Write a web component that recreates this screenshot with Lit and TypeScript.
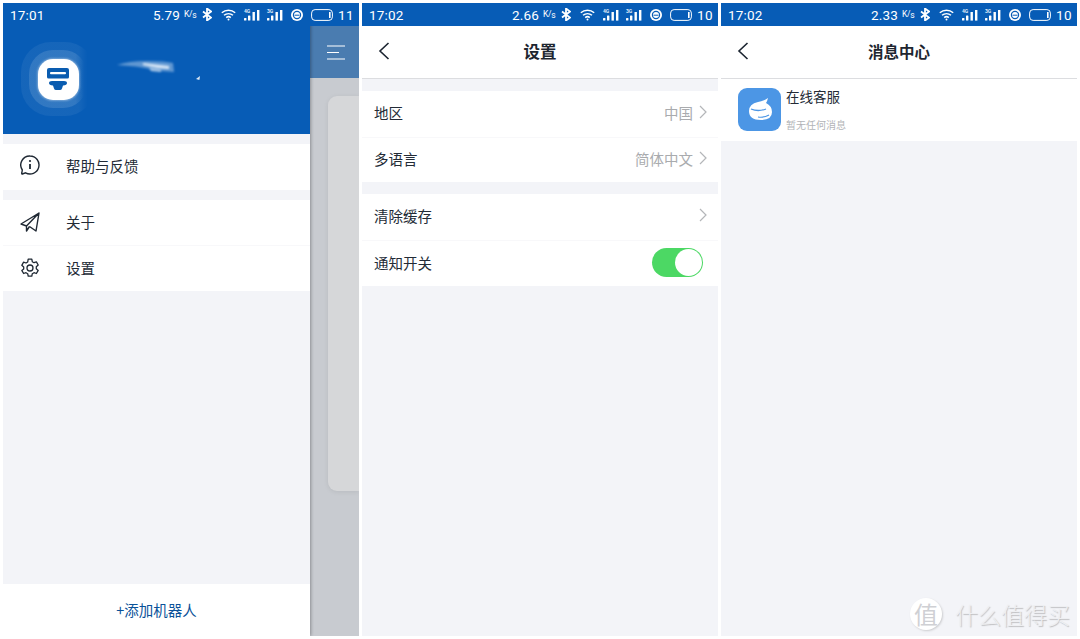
import { LitElement, html, css, svg } from "lit";
import { customElement, property } from "lit/decorators.js";

const signal = (t: string) => svg`<svg class="sig" width="17" height="14" viewBox="0 0 17 14">
  <text x="1" y="5" font-size="5" font-weight="700" fill="#dfeaf7" font-family="Roboto, sans-serif">${t}</text>
  <g fill="#fff"><rect x="1" y="10" width="2.400" height="2.600" rx=".6"/><rect x="5" y="7.500" width="2.400" height="5.100" rx=".6"/><rect x="9.500" y="4" width="2.400" height="8.600"/><rect x="14" y="2" width="2.400" height="10.600"/></g></svg>`;

@customElement("status-bar")
class StatusBar extends LitElement {
  @property() time = "";
  @property() speed = "";
  @property() batt = "";
  static styles = css`
    :host { display: flex; align-items: center; height: 23px; background: #075cb6; color: #fff;
      font-family: Roboto, "Liberation Sans", sans-serif; font-size: 13.5px; padding: 0 6px 0 7px; flex: none; }
    .time { letter-spacing: .2px; }
    .right { margin-left: auto; display: flex; align-items: center; }
    .speed { letter-spacing: .2px; }
    .unit { font-size: 8.500px; margin: -2px 6px 0 4px; width: 12px; white-space: nowrap; letter-spacing: -.3px; }
    .unit sub { font-size: 8.500px; vertical-align: -1px; line-height: 0; }
    svg { display: block; flex: none; }
    .bt { margin-right: 9px; }
    .wifi { margin-right: 7px; }
    .sig { margin-right: 6px; }
    .hd { margin: 0 8px 0 2px; }
    .bat { margin-right: 5px; }
    .num { letter-spacing: .4px; width: 15px; }
  `;
  render() {
    return html`<span class="time">${this.time}</span>
      <div class="right">
        <span class="speed">${this.speed}</span><span class="unit">K/<sub>s</sub></span>
        <svg class="bt" width="10" height="13" viewBox="0 0 10 13" fill="none" stroke="#fff" stroke-width="1.800"><path d="M1 3.500l8 6-4 3V.5l4 3-8 6"/></svg>
        <svg class="wifi" width="15" height="12" viewBox="0 0 15 12" fill="none" stroke="#fff" stroke-width="1.500"><path d="M.8 3.800a10 10 0 0 1 13.400 0M3 6.300a7 7 0 0 1 9 0M5.200 8.600a3.600 3.600 0 0 1 4.600 0"/><circle cx="7.500" cy="10.600" r="1" fill="#fff" stroke="none"/></svg>
        ${signal("4G")}${signal("3G")}
        <svg class="hd" width="12" height="12" viewBox="0 0 12 12"><circle cx="6" cy="6" r="6" fill="#fff"/><circle cx="6" cy="6" r="3.600" fill="none" stroke="#075cb6" stroke-width="1.200"/><path d="M3.500 6.200h5" stroke="#075cb6" stroke-width="1"/></svg>
        <svg class="bat" width="22" height="12" viewBox="0 0 22 12" fill="none" stroke="#fff"><rect x=".6" y=".6" width="20.800" height="10.800" rx="3.500"/><rect x="18" y="3" width="1.600" height="6" fill="#fff" stroke="none"/></svg>
        <span class="num">${this.batt}</span>
      </div>`;
  }
}

const chevron = html`<svg class="chev" width="8" height="14" viewBox="0 0 8 14" fill="none" stroke="#b4b6b9" stroke-width="1.200"><path d="M1 1l6 6-6 6"/></svg>`;
const back = html`<svg class="back" width="12" height="18" viewBox="0 0 12 18" fill="none" stroke="#1b2430" stroke-width="1.600"><path d="M10.500 1L2 9l8.500 8"/></svg>`;

@customElement("app-root")
class AppRoot extends LitElement {
  static styles = css`
    :host { display: grid; grid-template-columns: 356px 356px 356px; gap: 3px; padding: 3px; height: 639px; box-sizing: border-box;
      background: #fff; font-family: "Noto Sans CJK SC", "Liberation Sans", sans-serif; color: #232b36; overflow: hidden; }
    .panel { height: 633px; display: flex; flex-direction: column; background: #f3f4f8; overflow: hidden; position: relative; }
    .home { flex-direction: row; }
    .home status-bar { position: absolute; left: 0; right: 0; top: 0; z-index: 2; }
    .drawer { width: 307px; display: flex; flex-direction: column; background: #f3f4f8; box-shadow: 1px 0 3px rgba(0,0,0,.3); z-index: 1; position: relative; padding-top: 23px; box-sizing: border-box; }
    .side { flex: 1; display: flex; flex-direction: column; background: #c8cbd0; min-width: 0; padding-top: 23px; }
    .side-head { height: 52px; background: #4a7cb0; display: flex; align-items: center; justify-content: center; flex: none; padding-left: 3px; }
    .card { margin: 18px 0 0 18px; height: 395px; background: #d6d7d9; border-radius: 9px 0 0 9px; box-shadow: 0 1px 5px rgba(0,0,0,.08); }
    .profile { height: 108px; background: #075cb6; flex: none; display: flex; align-items: center; padding: 0 0 2px 18px; box-sizing: border-box; }
    .halo { width: 74px; height: 74px; border-radius: 30px; background: linear-gradient(90deg, rgba(255,255,255,.06) 78%, transparent 90%); display: flex; align-items: center; justify-content: center; flex: none; }
    .halo2 { width: 58px; height: 58px; border-radius: 24px; background: linear-gradient(90deg, rgba(255,255,255,.12) 80%, transparent 95%); display: flex; align-items: center; justify-content: center; }
    .logo { width: 41px; height: 41px; border-radius: 15px; background: #fff; box-shadow: 0 0 2px 1px rgba(255,255,255,.35); display: flex; align-items: center; justify-content: center; }
    .smear { display: block; flex: none; margin: -14px 0 0 16px; }
    .group { background: #fff; flex: none; }
    .gap { margin-top: 10px; }
    .menu { height: 45.500px; display: flex; align-items: center; padding: 0 0 1px 17px; font-size: 14.500px; box-sizing: border-box; }
    .menu.first { padding-bottom: 3px; }
    .menu + .menu { border-top: 1px solid #f8f8fa; }
    .menu svg { margin-right: 26px; flex: none; }
    .spacer { flex: 1; }
    .add { height: 52px; background: #fff; flex: none; display: flex; align-items: center; justify-content: center; color: #0a5299; font-size: 14.500px; padding-bottom: 2px; box-sizing: border-box; }
    .bar { height: 53px; background: #fff; border-bottom: 1px solid #dcdde0; flex: none; display: grid; grid-template-columns: 1fr auto 1fr; align-items: center; box-sizing: border-box; padding: 0 16px 3px; }
    .bar h1 { margin: 0; font-size: 15.500px; font-weight: 700; color: #1e2630; }
    .bar h1.big { font-size: 16.500px; }
    .back { display: block; }
    .rows { margin-top: 12px; }
    .rows + .rows { margin-top: 12px; }
    .row { height: 45.500px; display: flex; align-items: center; padding: 0 11px 3px 12px; font-size: 14.500px; box-sizing: border-box; }
    .tall .row { height: 46px; }
    .row + .row { border-top: 1px solid #f8f8fa; }
    .val { margin-left: auto; color: #a9abae; margin-right: 6px; }
    .only { margin-left: auto; }
    .switch { width: 51px; height: 29px; border-radius: 15px; background: #4cd864; display: flex; justify-content: flex-end; box-sizing: border-box; padding: 1px; margin: 1px 4px 0 auto; }
    .switch i { width: 27px; height: 27px; border-radius: 50%; background: #fff; display: block; }
    .msg { height: 62px; background: #fff; flex: none; display: flex; align-items: center; padding: 0 0 2px 17px; box-sizing: border-box; }
    .avatar { width: 43px; height: 43px; border-radius: 9px; background: #4c96e5; display: flex; align-items: center; justify-content: center; margin-right: 5px; flex: none; }
    .msg-text { display: flex; flex-direction: column; height: 43px; justify-content: space-between; margin-bottom: 2px; }
    .msg-title { font-size: 13.500px; line-height: 18px; }
    .msg-sub { font-size: 10px; line-height: 14px; color: #b2b4b7; margin-bottom: -2px; }
    .fill { flex: 1; position: relative; }
    .wm { position: absolute; right: 7px; bottom: 6px; display: flex; align-items: center; gap: 13px; color: #eeeff2; font-size: 23px; font-weight: 300; text-shadow: 1px 1px 1px rgba(110,110,110,.4); white-space: nowrap; line-height: 32px; }
    .wm b { width: 32px; height: 32px; border-radius: 50%; background: #fff; color: #cfd0d4; font-weight: 400; font-size: 24px; display: flex; align-items: center; justify-content: center; text-shadow: none; box-shadow: 1px 1px 2px rgba(120,120,120,.3); }
  `;
  render() {
    return html`
      <section class="panel home">
        <status-bar time="17:01" speed="5.79" batt="11"></status-bar>
        <div class="drawer">
          <div class="profile">
            <div class="halo"><div class="halo2"><div class="logo">
              <svg width="26" height="26" viewBox="0 0 26 26"><path d="M2 4q0-2 2-2h18q2 0 2 2v7q0 1.500-1.500 1.500h-19Q2 12.500 2 11z" fill="#0a5cb0"/><rect x="5" y="6" width="16" height="2.200" rx="1" fill="#fff"/><path d="M4 17q0-2 3-2h12q3 0 3 2t-4 2.500l-1 3q-.5 1.500-2 1.500h-4q-1.500 0-2-1.500l-1-3Q4 19 4 17z" fill="#0a5cb0"/></svg>
            </div></div></div>
            <svg class="smear" width="96" height="32" viewBox="0 0 96 32">
              <defs><filter id="s"><feGaussianBlur stdDeviation="1.100"/></filter></defs>
              <g filter="url(#s)" fill="#a9c8ea"><path d="M6 9q12-4 30-4 18 0 26 2l1 9q-12 0-24-3T6 9z" opacity=".55"/><path d="M32 7l26 3v3l-12-1-14-3z" fill="#e6eff9" opacity=".9"/><path d="M38 12l12 2v2l-10-1z" fill="#e6eff9" opacity=".7"/></g>
              <path d="M85 23l4-3-.6 4z" fill="#dbe8f6"/>
            </svg>
          </div>
          <div class="group gap">
            <div class="menu first">
              <svg width="20" height="20" viewBox="0 0 20 20" fill="none" stroke="#1f2833" stroke-width="1.400"><path d="M10 1a9 9 0 1 1-4.500 16.800L2.500 19q-1 0-.7-1l.5-3A9 9 0 0 1 10 1z"/><path d="M10 9v5" stroke-width="1.800"/><circle cx="10" cy="6" r="1.100" fill="#1f2833" stroke="none"/></svg>
              帮助与反馈
            </div>
          </div>
          <div class="group gap">
            <div class="menu">
              <svg width="20" height="20" viewBox="0 0 20 20" fill="none" stroke="#1f2833" stroke-width="1.400" stroke-linejoin="round"><path d="M19 1L1 12l5.500 2L19 1zM19 1l-3 18-6.500-4.500M6.500 14v5l3-4.500"/></svg>
              关于
            </div>
            <div class="menu">
              <svg width="20" height="20" viewBox="0 0 20 20" fill="none" stroke="#1f2833" stroke-width="1.300" stroke-linejoin="round"><path d="M8.200 1.200h3.600l.5 2.500 1.700 1 2.400-.8 1.800 3.100-1.900 1.700v2l1.900 1.700-1.800 3.100-2.400-.8-1.700 1-.5 2.500H8.200l-.5-2.500-1.700-1-2.400.8-1.800-3.100L3.700 11V9L1.800 7.300 3.600 4.200l2.400.8 1.700-1z"/><circle cx="10" cy="10" r="3"/></svg>
              设置
            </div>
          </div>
          <div class="spacer"></div>
          <div class="add">+添加机器人</div>
        </div>
        <div class="side">
          <div class="side-head">
            <svg width="18" height="15" viewBox="0 0 18 15" fill="none" stroke="#fff" stroke-width="1.200"><path d="M0 1h18M0 7.500h12M0 14h18"/></svg>
          </div>
          <div class="card"></div>
        </div>
      </section>

      <section class="panel">
        <status-bar time="17:02" speed="2.66" batt="10"></status-bar>
        <div class="bar"><div>${back}</div><h1 class="big">设置</h1><div></div></div>
        <div class="group rows">
          <div class="row">地区<span class="val">中国</span>${chevron}</div>
          <div class="row">多语言<span class="val">简体中文</span>${chevron}</div>
        </div>
        <div class="group rows tall">
          <div class="row">清除缓存<span class="only">${chevron}</span></div>
          <div class="row">通知开关<span class="switch"><i></i></span></div>
        </div>
      </section>

      <section class="panel">
        <status-bar time="17:02" speed="2.33" batt="10"></status-bar>
        <div class="bar"><div>${back}</div><h1>消息中心</h1><div></div></div>
        <div class="msg">
          <div class="avatar">
            <svg width="26" height="26" viewBox="0 0 26 26"><path d="M11 6q6-1 10-4-1 4-2 5 6 3 6 9 0 8-11 8Q2 24 2 15q0-7 9-9z" fill="#fff"/><path d="M4 13q7 3 15 0" fill="none" stroke="#4c96e5" stroke-width="1.300"/><path d="M11 21q6 1 11-2" fill="none" stroke="#4c96e5" stroke-width="1.200"/></svg>
          </div>
          <div class="msg-text"><span class="msg-title">在线客服</span><span class="msg-sub">暂无任何消息</span></div>
        </div>
        <div class="fill"><div class="wm"><b>值</b>什么值得买</div></div>
      </section>`;
  }
}
